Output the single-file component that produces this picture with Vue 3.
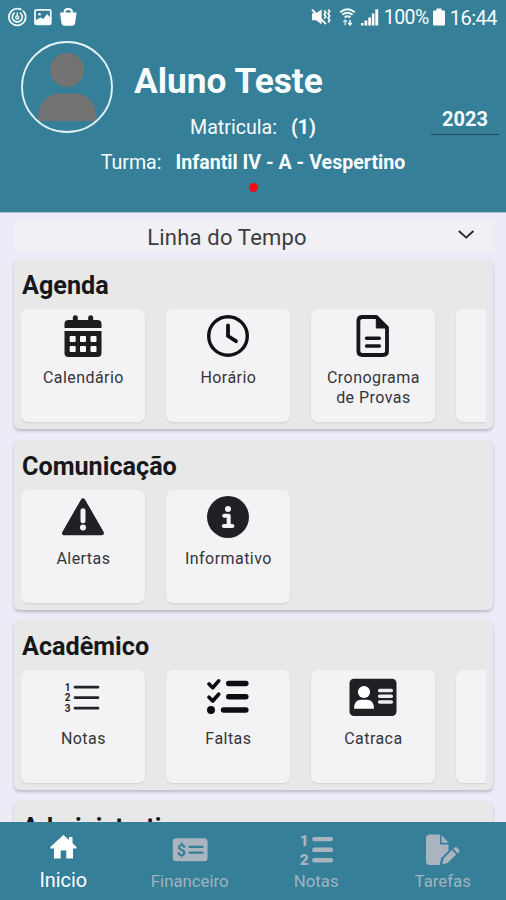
<script setup>
const sections = [
  {
    title: 'Agenda',
    tiles: [
      { icon: 'calendar', label: 'Calendário' },
      { icon: 'clock', label: 'Horário' },
      { icon: 'file', label: 'Cronograma\nde Provas' },
      { icon: '', label: '' },
    ],
  },
  {
    title: 'Comunicação',
    tiles: [
      { icon: 'alert', label: 'Alertas' },
      { icon: 'info', label: 'Informativo' },
    ],
  },
  {
    title: 'Acadêmico',
    tiles: [
      { icon: 'numbers', label: 'Notas' },
      { icon: 'checks', label: 'Faltas' },
      { icon: 'idcard', label: 'Catraca' },
      { icon: '', label: '' },
    ],
  },
  { title: 'Administrativo', tiles: [{ icon: '', label: '' }] },
]

const tabs = [
  { icon: 'home', label: 'Inicio', active: true },
  { icon: 'money', label: 'Financeiro' },
  { icon: 'list', label: 'Notas' },
  { icon: 'tasks', label: 'Tarefas' },
]
</script>

<template>
  <div class="screen">
    <header class="header">
      <div class="status">
        <svg class="status-left" width="80" height="34" viewBox="0 0 80 34">
          <g fill="none" stroke="#eef7fa" stroke-linecap="round">
            <circle cx="17.3" cy="17" r="8.4" stroke-width="1.8" stroke-dasharray="43 3 5 2" />
            <path d="M14.2 13.1a5 5 0 1 0 6.2 0" stroke-width="1.8" />
            <path d="M17.3 13v3" stroke-width="1.4" />
            <circle cx="17.3" cy="17.5" r="1.5" stroke-width="1.5" />
          </g>
          <rect x="35" y="9.8" width="15.8" height="14.6" rx="1.4" fill="none" stroke="#eef7fa" stroke-width="1.8" />
          <path d="M35.5 20.5l5-3 2.8 1.4 3.8-5 3.5 4.2v5.8H35.5z" fill="#fff" />
          <circle cx="39.5" cy="14.2" r="1.3" fill="#fff" />
          <path d="M60 12.5h16.6l-1.4 10.3q-.5 3-3.2 3h-7.4q-2.7 0-3.2-3z" fill="#fff" />
          <path d="M64.5 14v-1.6c0-4.6 7.5-4.6 7.5 0V14" fill="none" stroke="#fff" stroke-width="2" />
        </svg>
        <div class="status-right">
          <svg width="72" height="34" viewBox="0 0 72 34">
            <path d="M3 13.3h4l5.6-3.8v14.8L7 20.3H3z" fill="#fff" />
            <path d="M3 9.6l14 14.5" stroke="#fff" stroke-width="2" />
            <path d="M15.3 10.5l1.5 2-1.5 2 1.5 2-1.5 2M19.2 9.5l1.5 2-1.5 2.2 1.5 2.2-1.5 2.2 1.5 2.2-1.5 2.2" fill="none" stroke="#fff" stroke-width="1.7" />
            <path d="M31.2 12.2q7.3-6 14.6 0M33.4 14.8q5.1-4.2 10.2 0M35.6 17.4q2.9-2.4 5.8 0" fill="none" stroke="#f2fafc" stroke-width="2" />
            <path d="M36.2 20.2v5M34.4 22l1.8-2 1.8 2" fill="none" stroke="#c4dce3" stroke-width="1.5" />
            <path d="M41 20v5M39.2 23l1.8 2 1.8-2" fill="none" stroke="#fff" stroke-width="1.5" />
            <path d="M52 25.5V23h2.5v2.5zM55.5 25.5v-5h2.8v5zM59.2 25.5v-8h2.9v8zM62.9 25.5v-12h2.5v12zM66.3 25.5V9.2h2.9v16.3z" fill="#fff" />
          </svg>
          <span class="percent">100%</span>
          <svg class="battery" width="12" height="34" viewBox="0 0 12 34">
            <path d="M3.5 8.5h5v2H11a1 1 0 0 1 1 1v13a1 1 0 0 1-1 1H1a1 1 0 0 1-1-1v-13a1 1 0 0 1 1-1h2.5z" fill="#fff" />
          </svg>
          <span class="time">16:44</span>
        </div>
      </div>
      <div class="profile">
        <svg class="avatar" width="92" height="92" viewBox="0 0 92 92">
          <circle cx="46" cy="29" r="17" fill="#737373" />
          <path d="M17 80C16 60 29 52.5 39 52.5H54C65 52.5 77 61 75.3 80z" fill="#737373" />
          <circle cx="46" cy="46" r="45" fill="none" stroke="#e2f2f7" stroke-width="1.8" />
        </svg>
        <h1 class="name">Aluno Teste</h1>
        <div class="info-line matricula"><span>Matricula:</span><b>(1)</b></div>
        <div class="year">2023</div>
        <div class="info-line turma"><span>Turma:</span><b>Infantil IV - A - Vespertino</b></div>
        <i class="dot"></i>
      </div>
    </header>

    <main class="content">
      <div class="timeline">
        <span class="timeline-label">Linha do Tempo</span>
        <svg width="18" height="12" viewBox="0 0 18 12"><path d="M1.8 2l7.4 6.6L16.4 2" fill="none" stroke="#202226" stroke-width="1.8" /></svg>
      </div>

      <section v-for="s in sections" :key="s.title" class="panel">
        <h2>{{ s.title }}</h2>
        <div class="tiles">
          <div v-for="(t, i) in s.tiles" :key="i" class="tile">
            <svg v-if="t.icon" class="tile-icon" width="52" height="48" viewBox="0 0 52 48">
              <g v-if="t.icon === 'calendar'" fill="#1c1d1f">
                <path d="M7.5 19V15q0-4 4-4h29q4 0 4 4v4z" />
                <path d="M18.3 8.7v5M33.7 8.7v5" stroke="#1c1d1f" stroke-width="5" stroke-linecap="round" />
                <path d="M7.5 22h37v22q0 4-4 4h-29q-4 0-4-4z" />
                <g fill="#fff">
                  <rect x="12.7" y="27" width="6" height="6" rx="1" /><rect x="23" y="27" width="6" height="6" rx="1" /><rect x="33.5" y="27" width="6" height="6" rx="1" />
                  <rect x="12.7" y="37" width="6" height="6" rx="1" /><rect x="23" y="37" width="6" height="6" rx="1" /><rect x="33.5" y="37" width="6" height="6" rx="1" />
                </g>
              </g>
              <g v-else-if="t.icon === 'clock'" fill="none" stroke="#101114">
                <circle cx="26" cy="27" r="19.3" stroke-width="3.4" />
                <path d="M26 16.4V27l8 5.2" stroke-width="3.8" stroke-linecap="round" stroke-linejoin="round" />
              </g>
              <g v-else-if="t.icon === 'file'">
                <path d="M15.4 8H29.5L40 18.5V42q0 4-4 4H15.4q-4 0-4-4V12q0-4 4-4z" fill="none" stroke="#151619" stroke-width="3.8" stroke-linejoin="round" />
                <path d="M29.3 8v11H40z" fill="#151619" stroke="#151619" />
                <path d="M19.6 29.3h12.7M19.6 37h12.7" stroke="#151619" stroke-width="3.6" stroke-linecap="round" />
              </g>
              <g v-else-if="t.icon === 'alert'">
                <path d="M26 10.5L7.3 43H44.7z" fill="#202124" stroke="#202124" stroke-width="4.5" stroke-linejoin="round" />
                <path d="M26 20.8v10" stroke="#f4f4f5" stroke-width="5" stroke-linecap="round" />
                <circle cx="26" cy="37.6" r="3" fill="#f4f4f5" />
              </g>
              <g v-else-if="t.icon === 'info'">
                <circle cx="26" cy="27" r="21" fill="#202124" />
                <circle cx="26" cy="19" r="3" fill="#f4f4f5" />
                <path d="M22.2 25.7h4.5v10M21.8 36h8.6" fill="none" stroke="#f4f4f5" stroke-width="4" stroke-linecap="round" stroke-linejoin="round" />
              </g>
              <g v-else-if="t.icon === 'numbers'">
                <path d="M18 17.2h23M18 27.7h23M18 38.2h23" stroke="#24252a" stroke-width="2.7" stroke-linecap="round" />
                <g class="digits-small">
                  <text x="10.5" y="20.6">1</text><text x="10.5" y="31.2">2</text><text x="10.5" y="41.8">3</text>
                </g>
              </g>
              <g v-else-if="t.icon === 'checks'" fill="none" stroke="#0c0d10" stroke-linecap="round">
                <path d="M26.7 13.5h17.2M26.7 26.7h17.2M21.5 40h22.4" stroke-width="5.4" />
                <path d="M7 14l3.7 3.7 6-6.8M7 27.3l3.7 3.7 6-6.8" stroke-width="3.7" stroke-linejoin="round" />
                <circle cx="9" cy="40" r="4" fill="#0c0d10" stroke="none" />
              </g>
              <g v-else-if="t.icon === 'idcard'">
                <rect x="2.5" y="8.7" width="47" height="37.3" rx="4.5" fill="#1f2023" />
                <circle cx="17" cy="22" r="6.1" fill="#fff" />
                <path d="M7 38.7q0-9 7.5-9h5q7.5 0 7.5 9z" fill="#fff" />
                <path d="M32.7 20.5h11.6M32.7 26.2h11.6M32.7 32h11.6" stroke="#ededed" stroke-width="3.6" stroke-linecap="round" />
              </g>
            </svg>
            <span class="tile-label">{{ t.label }}</span>
          </div>
        </div>
      </section>
    </main>

    <nav class="tabs">
      <div v-for="t in tabs" :key="t.icon" class="tab" :class="{ active: t.active }">
        <svg class="tab-icon" width="40" height="36" viewBox="0 0 40 36">
          <path v-if="t.icon === 'home'" d="M20.5 4L7.5 15.8v1.6H11V27.6h6.7V19.5h5.6v8.1H30V17.4h3.5V16l-4-3.7V6H26v2.9z" fill="#fff" />
          <g v-else-if="t.icon === 'money'">
            <rect x="2.8" y="7.3" width="34.8" height="23" rx="3.5" fill="#a9b4bf" />
            <path d="M19.5 15.9h13M19.5 21.7h13" stroke="#357f98" stroke-width="2.2" stroke-linecap="round" />
            <text class="dollar" x="11.4" y="24.7">$</text>
          </g>
          <g v-else-if="t.icon === 'list'">
            <path d="M18.3 8.1h16.7M18.3 18.7h16.7M18.3 29.3h16.7" stroke="#a9b4bf" stroke-width="4.4" stroke-linecap="round" />
            <g class="digits-tab"><text x="8.2" y="15.4">1</text><text x="8.2" y="33.7">2</text></g>
          </g>
          <g v-else fill="#a9b4bf">
            <path d="M7 3.5h10v10h8.5v6.3l-7.3 7.2-1.5 7.1H7q-4 0-4-4V7.5q0-4 4-4z" />
            <path d="M18.5 3.9l7 7.8h-7z" />
            <path d="M20.6 27.4l8.3-8.3 4.4 4.4-8.4 8.3-5.6 1.8zM30.2 17.8l1.2-1.1q1.4-1.2 2.8 0l1.8 1.8q1.2 1.4 0 2.8l-1.2 1.1z" />
          </g>
        </svg>
        <span class="tab-label">{{ t.label }}</span>
      </div>
    </nav>
  </div>
</template>

<style>
body {
  margin: 0;
  overflow: hidden;
}
</style>

<style scoped>
.screen {
  width: 506px;
  height: 900px;
  display: flex;
  flex-direction: column;
  overflow: hidden;
  background: #ecebf7;
  font-family: Roboto, "Liberation Sans", sans-serif;
}
.header {
  height: 213px;
  flex: none;
  background: #357f98;
  color: #f8fdff;
  border-bottom: 1px solid #a9c3d5;
  box-sizing: border-box;
}
.status {
  height: 34px;
  display: flex;
  justify-content: space-between;
}
.status-right {
  display: flex;
  align-items: center;
  padding-right: 9px;
}
.percent {
  width: 49px;
  margin-left: 3px;
  white-space: nowrap;
  font-size: 19.5px;
  letter-spacing: -0.5px;
  line-height: 36px;
  padding-top: 2px;
}
.time {
  margin-left: 5px;
  font-size: 20px;
  letter-spacing: -0.5px;
  line-height: 36px;
  padding-top: 2px;
}
.profile {
  display: grid;
  grid-template-columns: 113px 1fr 75px;
  grid-template-rows: 72px 31px 24px 20px;
  padding-top: 7px;
}
.avatar {
  grid-area: 1 / 1 / 3 / 2;
  margin-left: 21px;
}
.name {
  grid-area: 1 / 2 / 2 / 3;
  margin: 19px 0 0 21px;
  font-size: 35.3px;
  line-height: 42px;
  font-weight: 700;
  white-space: nowrap;
}
.info-line {
  display: flex;
  justify-content: center;
  gap: 14px;
  font-size: 19.6px;
  line-height: 24px;
  white-space: nowrap;
}
.matricula {
  grid-area: 2 / 1 / 3 / 4;
  padding-top: 3px;
}
.turma {
  grid-area: 3 / 1 / 4 / 4;
  padding-top: 7px;
}
.year {
  grid-area: 1 / 3 / 3 / 4;
  align-self: start;
  margin: 63px 7px 0 0;
  height: 30px;
  border-bottom: 1.5px solid #204d5d;
  text-align: center;
  font-size: 20px;
  font-weight: 700;
  line-height: 30px;
}
.dot {
  grid-area: 4 / 1 / 5 / 4;
  justify-self: center;
  align-self: end;
  width: 9px;
  height: 9px;
  margin-bottom: -4px;
  border-radius: 50%;
  background: #f60a10;
}
.content {
  flex: 1;
  min-height: 0;
  overflow: hidden;
  padding: 7px 13px 0 14px;
}
.timeline {
  height: 32px;
  display: flex;
  align-items: center;
  background: #f1f0f4;
}
.timeline-label {
  flex: 1;
  padding-right: 17px;
  padding-top: 2px;
  text-align: center;
  font-size: 22px;
  letter-spacing: 0.2px;
  color: #3c3d42;
}
.timeline svg {
  margin: 0 18px 2px 0;
}
.panel {
  height: 170px;
  box-sizing: border-box;
  padding: 0 7px 0 8px;
  margin-top: 7px;
  border-radius: 6px;
  background: #e8e8e8;
  box-shadow: 0 2px 3px rgba(40, 40, 60, 0.25);
}
.panel + .panel {
  margin-top: 10.6px;
}
h2 {
  margin: 0;
  height: 50px;
  padding-top: 13px;
  box-sizing: border-box;
  font-size: 25.2px;
  line-height: 28px;
  font-weight: 700;
  color: #17181b;
}
.tiles {
  display: flex;
  gap: 21px;
  overflow: hidden;
  margin-left: -0.6px;
  padding-bottom: 2px;
}
.tile {
  width: 124px;
  height: 113px;
  flex: none;
  display: flex;
  flex-direction: column;
  align-items: center;
  border-radius: 7px;
  background: #f3f3f5;
  box-shadow: 0 1px 2px rgba(40, 40, 60, 0.12);
}
.tile-label {
  margin-top: 11px;
  font-size: 16px;
  line-height: 20px;
  letter-spacing: 0.45px;
  color: #34353a;
  text-align: center;
  white-space: pre;
}
.digits-small {
  font: 700 10px Roboto, sans-serif;
  fill: #24252a;
  text-anchor: middle;
}
.tabs {
  height: 78px;
  flex: none;
  display: grid;
  grid-template-columns: repeat(4, 1fr);
  background: #357f98;
}
.tab {
  display: flex;
  flex-direction: column;
  align-items: center;
  padding-top: 9px;
  color: #a1b3c0;
}
.tab-label {
  margin-top: 4px;
  font-size: 16.8px;
  line-height: 20px;
}
.active .tab-label {
  color: #fff;
  font-size: 19.8px;
}
.dollar {
  font: 700 16px Roboto, sans-serif;
  fill: #357f98;
  text-anchor: middle;
}
.digits-tab {
  font: 900 15.5px Roboto, sans-serif;
  fill: #a9b4bf;
  text-anchor: middle;
}
</style>
